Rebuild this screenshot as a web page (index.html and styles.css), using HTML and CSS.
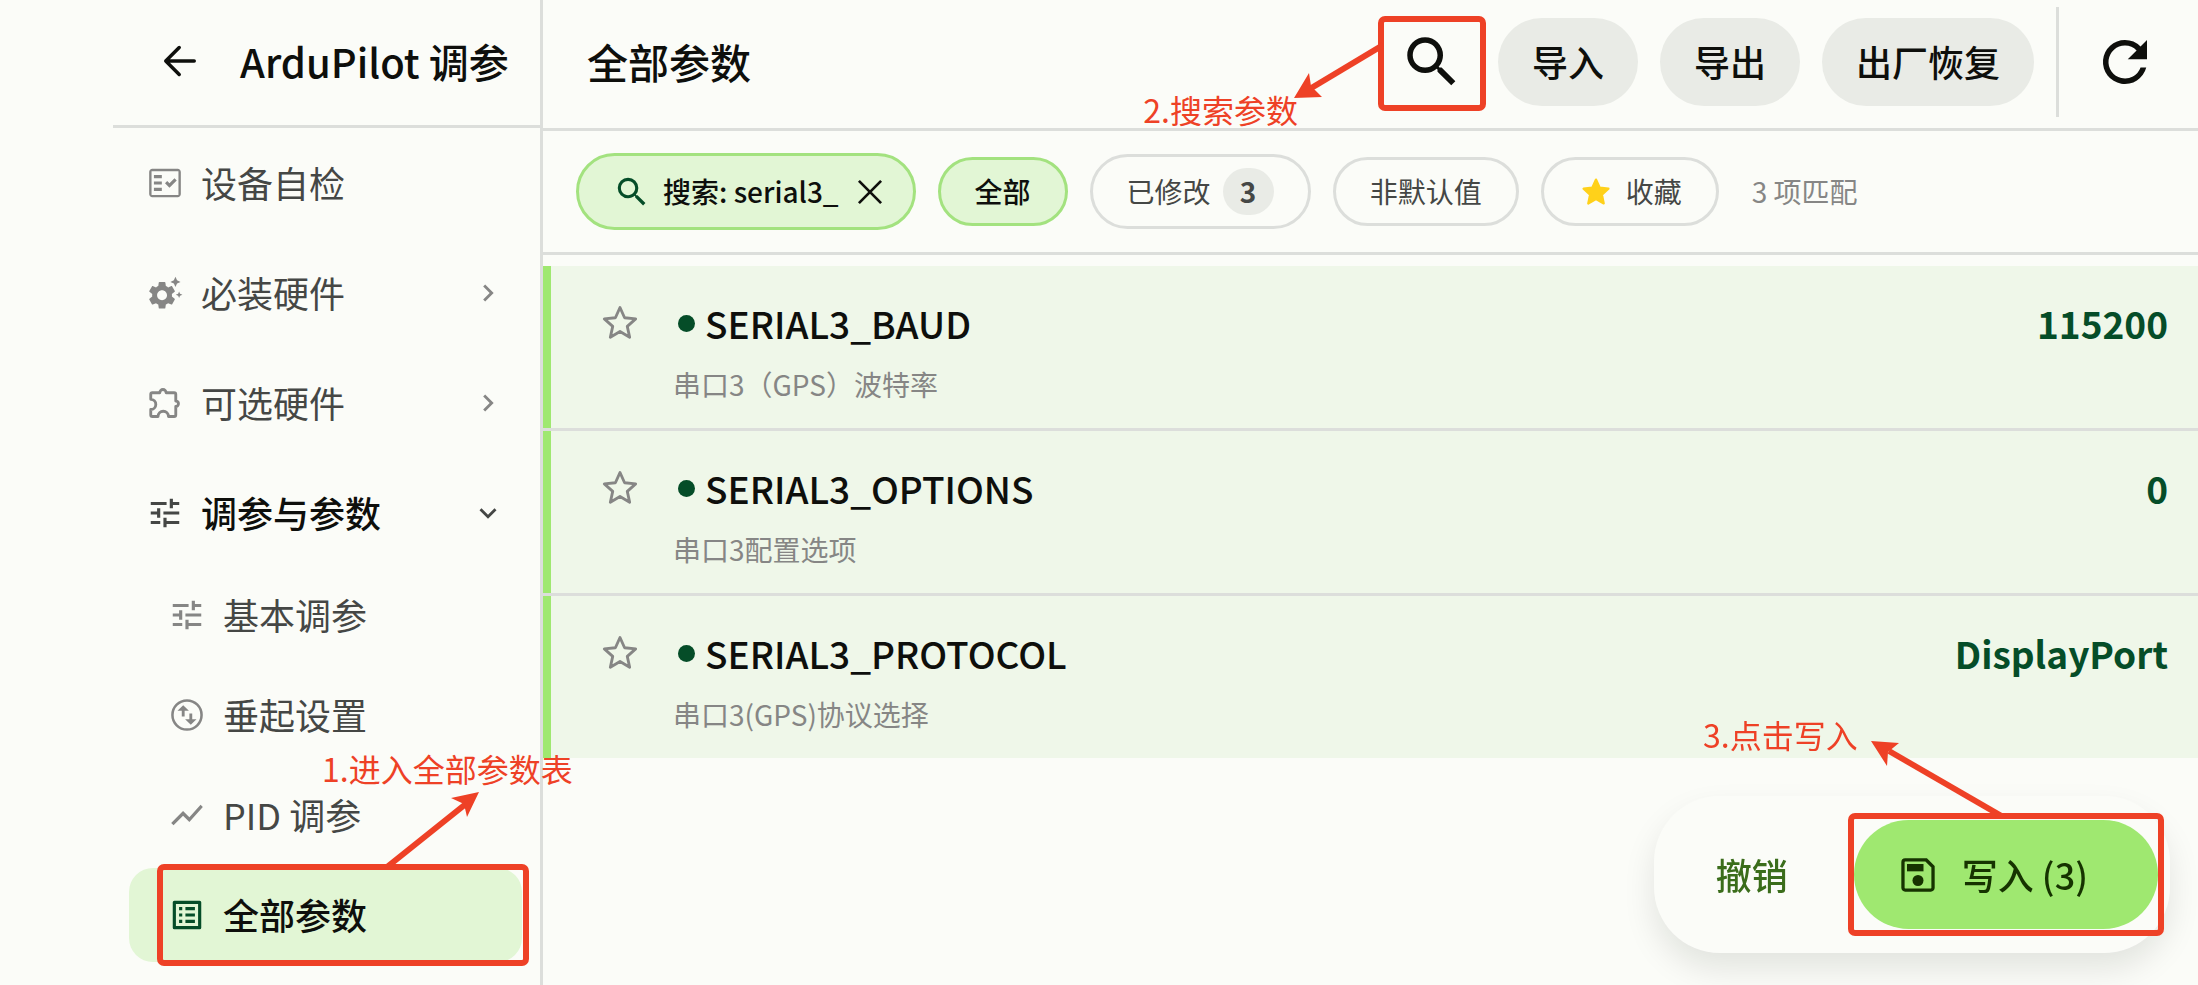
FILE: index.html
```
<!DOCTYPE html>
<html lang="zh-CN">
<head>
    <meta charset="UTF-8">
    <meta name="viewport" content="width=device-width, initial-scale=1.0">
    <title>ArduPilot 调参</title>
    <link rel="stylesheet" href="styles.css">
</head>
<body>
    <svg class="sprite" aria-hidden="true">
        <symbol id="i-tune" viewBox="0 0 24 24"><path d="M3 17v2h6v-2H3zM3 5v2h10V5H3zm10 16v-2h8v-2h-8v-2h-2v6h2zM7 9v2H3v2h4v2h2V9H7zm14 4v-2H11v2h10zm-6-4h2V7h4V5h-4V3h-2v6z"/></symbol>
        <symbol id="i-right" viewBox="0 0 24 24"><path d="M8.59 16.59 13.17 12 8.59 7.41 10 6l6 6-6 6z"/></symbol>
        <symbol id="i-search" viewBox="0 0 24 24"><path d="M15.5 14h-.79l-.28-.27A6.47 6.47 0 0 0 16 9.5 6.5 6.5 0 1 0 9.5 16c1.61 0 3.09-.59 4.23-1.57l.27.28v.79l5 4.99L20.49 19l-4.99-5zm-6 0C7.01 14 5 11.99 5 9.5S7.01 5 9.5 5 14 7.01 14 9.5 11.99 14 9.5 14z"/></symbol>
        <symbol id="i-star" viewBox="0 0 24 24"><path d="M12 2.200l2.900 6.500 7 .7-5.300 4.700 1.500 6.900-6.100-3.600-6.100 3.600 1.500-6.900-5.300-4.700 7-.7z" fill="none" stroke="currentColor" stroke-width="1.800" stroke-linejoin="round"/></symbol>
    </svg>

    <div class="app">
        <aside class="sidebar">
            <header class="sidebar-header">
                <button class="back" aria-label="返回">
                    <svg class="icon" viewBox="0 0 24 24"><path d="M21 12H3M11.500 3.500L3 12l8.500 8.500" fill="none" stroke="currentColor" stroke-width="2.200" stroke-linecap="round" stroke-linejoin="round"/></svg>
                </button>
                <h2>ArduPilot 调参</h2>
            </header>
            <nav class="menu">
                <a class="menu-item" href="#">
                    <svg class="icon" viewBox="0 0 24 24"><path d="M20 3H4c-1.100 0-2 .9-2 2v14c0 1.100.9 2 2 2h16c1.100 0 2-.9 2-2V5c0-1.100-.9-2-2-2zm0.500 16.500h-17v-15h17v15z"/><path d="M19.410 10.420 17.990 9l-3.170 3.170-1.410-1.420L12 12.160 14.820 15zM5 7h5v2H5zm0 4h5v2H5zm0 4h5v2H5z"/></svg>
                    <span>设备自检</span>
                </a>
                <a class="menu-item" href="#">
                    <svg class="icon" viewBox="0 0 24 24"><path transform="translate(-.3 3) scale(.87)" d="M19.140 12.940c.04-.3.06-.61.06-.94 0-.32-.02-.64-.07-.94l2.030-1.580c.18-.14.23-.41.12-.61l-1.920-3.320c-.12-.22-.37-.29-.59-.22l-2.390.96c-.5-.38-1.030-.7-1.620-.94l-.36-2.540c-.04-.24-.24-.41-.48-.41h-3.840c-.24 0-.43.17-.47.41l-.36 2.540c-.59.24-1.130.57-1.620.94l-2.390-.96c-.22-.08-.47 0-.59.22L2.740 8.870c-.12.21-.08.47.12.61l2.030 1.580c-.05.3-.09.63-.09.94s.02.64.07.94l-2.030 1.580c-.18.14-.23.41-.12.61l1.920 3.320c.12.22.37.29.59.22l2.390-.96c.5.38 1.030.7 1.620.94l.36 2.540c.05.24.24.41.48.41h3.840c.24 0 .44-.17.47-.41l.36-2.540c.59-.24 1.130-.56 1.620-.94l2.390.96c.22.08.47 0 .59-.22l1.920-3.320c.12-.22.07-.47-.12-.61zM12 15.600c-1.980 0-3.600-1.620-3.600-3.600s1.620-3.600 3.600-3.600 3.600 1.620 3.600 3.600-1.620 3.600-3.600 3.600z"/><path d="M18.600 1.800l1 2.200 2.200 1-2.200 1-1 2.200-1-2.200-2.200-1 2.200-1zM20.900 11l.6 1.500 1.500.6-1.500.6-.6 1.500-.6-1.500-1.500-.6 1.500-.6z"/></svg>
                    <span>必装硬件</span>
                    <svg class="arrow" viewBox="0 0 24 24"><use href="#i-right"/></svg>
                </a>
                <a class="menu-item" href="#">
                    <svg class="icon" viewBox="0 0 24 24"><path d="M4.500 5.500h4.200a2 2 0 0 1 4 0h5.100a1 1 0 0 1 1 1v4.300a1.700 1.700 0 0 1 0 3.400v5.300a1 1 0 0 1-1 1h-3.600a3.300 3.300 0 0 0-6.600 0H4a1 1 0 0 1-1-1v-3.400a3.200 3.200 0 0 0 0-6.400V6.500a1 1 0 0 1 1-1z" fill="none" stroke="currentColor" stroke-width="1.800" stroke-linejoin="round"/></svg>
                    <span>可选硬件</span>
                    <svg class="arrow" viewBox="0 0 24 24"><use href="#i-right"/></svg>
                </a>
                <a class="menu-item open" href="#">
                    <svg class="icon" viewBox="0 0 24 24"><use href="#i-tune"/></svg>
                    <span>调参与参数</span>
                    <svg class="arrow" viewBox="0 0 24 24"><path d="M7.410 8.590 12 13.170l4.590-4.580L18 10l-6 6-6-6z"/></svg>
                </a>
                <div class="submenu">
                    <a class="submenu-item" href="#">
                        <svg class="icon" viewBox="0 0 24 24"><use href="#i-tune"/></svg>
                        <span>基本调参</span>
                    </a>
                    <a class="submenu-item" href="#">
                        <svg class="icon" viewBox="0 0 24 24"><circle cx="12" cy="12" r="9.200" fill="none" stroke="currentColor" stroke-width="1.600"/><path d="M6 9.300 9.600 5.800l3.600 3.500h-2.700V13H8.700V9.300zM18 14.700l-3.600 3.500-3.600-3.500h2.700V11h1.800v3.700z"/></svg>
                        <span>垂起设置</span>
                    </a>
                    <a class="submenu-item" href="#">
                        <svg class="icon" viewBox="0 0 24 24"><path d="m3.500 18.490 6-6.010 4 4L22 6.920l-1.410-1.410-7.090 7.970-4-4L2 16.990z"/></svg>
                        <span>PID 调参</span>
                    </a>
                    <a class="submenu-item active" href="#">
                        <svg class="icon" viewBox="0 0 24 24"><path d="M4 3a1 1 0 0 0-1 1v16a1 1 0 0 0 1 1h16a1 1 0 0 0 1-1V4a1 1 0 0 0-1-1zm15 16H5V5h14zM11 7h6v2h-6zm0 4h6v2h-6zm0 4h6v2h-6zM7 7h2v2H7zm0 4h2v2H7zm0 4h2v2H7z"/></svg>
                        <span>全部参数</span>
                        <div class="callout callout-nav">
                            <svg class="callout-arrow" viewBox="0 0 100 80"><path d="M6 77 86 13" stroke="currentColor" stroke-width="6"/><path d="M98 2 86 27 83 14 70 8z"/></svg>
                            <span class="callout-text">1.进入全部参数表</span>
                        </div>
                    </a>
                </div>
            </nav>
        </aside>

        <main class="content">
            <header class="toolbar">
                <h1>全部参数</h1>
                <button class="icon-button" aria-label="搜索">
                    <svg class="icon-large" viewBox="0 0 24 24"><use href="#i-search"/></svg>
                    <span class="callout callout-search">
                        <svg class="callout-arrow" viewBox="0 0 100 60"><path d="M99 4 24 49" stroke="currentColor" stroke-width="6"/><path d="M10 57 25 32 27 45 38 56z"/></svg>
                        <span class="callout-text">2.搜索参数</span>
                    </span>
                </button>
                <button class="tool-button">导入</button>
                <button class="tool-button">导出</button>
                <button class="tool-button">出厂恢复</button>
                <span class="divider"></span>
                <button class="icon-button" aria-label="刷新">
                    <svg class="icon-large" viewBox="0 0 24 24"><path d="M17.650 6.350A7.960 7.960 0 0 0 12 4a8 8 0 1 0 7.730 10h-2.080A6 6 0 1 1 12 6c1.660 0 3.140.69 4.220 1.780L13 11h7V4z"/></svg>
                </button>
            </header>

            <section class="filters">
                <div class="chip search-chip selected">
                    <svg class="icon" viewBox="0 0 24 24"><use href="#i-search"/></svg>
                    <span>搜索: serial3_</span>
                    <button class="clear" aria-label="清除搜索">
                        <svg class="icon" viewBox="0 0 24 24"><path d="M5 5l14 14M19 5L5 19" fill="none" stroke="currentColor" stroke-width="1.700"/></svg>
                    </button>
                </div>
                <button class="chip selected">全部</button>
                <button class="chip count-chip">已修改 <span class="count">3</span></button>
                <button class="chip">非默认值</button>
                <button class="chip">
                    <svg class="fav" viewBox="-1 -1 26 26"><path d="M12 3l2.700 5.900 6.300.7-4.700 4.300 1.300 6.400-5.600-3.300-5.600 3.300 1.300-6.400L3 9.600l6.300-.7z" stroke="currentColor" stroke-width="1.600" stroke-linejoin="round"/></svg>
                    收藏
                </button>
                <span class="matches">3 项匹配</span>
            </section>

            <ul class="params">
                <li class="param">
                    <button class="star" aria-label="收藏 SERIAL3_BAUD"><svg viewBox="0 0 24 24"><use href="#i-star"/></svg></button>
                    <div class="param-info">
                        <h3><i class="dot"></i>SERIAL3_BAUD</h3>
                        <p>串口3（GPS）波特率</p>
                    </div>
                    <strong class="param-value">115200</strong>
                </li>
                <li class="param">
                    <button class="star" aria-label="收藏 SERIAL3_OPTIONS"><svg viewBox="0 0 24 24"><use href="#i-star"/></svg></button>
                    <div class="param-info">
                        <h3><i class="dot"></i>SERIAL3_OPTIONS</h3>
                        <p>串口3配置选项</p>
                    </div>
                    <strong class="param-value">0</strong>
                </li>
                <li class="param">
                    <button class="star" aria-label="收藏 SERIAL3_PROTOCOL"><svg viewBox="0 0 24 24"><use href="#i-star"/></svg></button>
                    <div class="param-info">
                        <h3><i class="dot"></i>SERIAL3_PROTOCOL</h3>
                        <p>串口3(GPS)协议选择</p>
                    </div>
                    <strong class="param-value">DisplayPort</strong>
                </li>
            </ul>

            <div class="action-bar">
                <button class="undo">撤销</button>
                <button class="write">
                    <svg class="save" viewBox="0 0 24 24"><path d="M5 3.800h11.500l3.700 3.700V19a1.200 1.200 0 0 1-1.200 1.200H5A1.200 1.200 0 0 1 3.800 19V5A1.200 1.200 0 0 1 5 3.800z" fill="none" stroke="currentColor" stroke-width="1.800"/><path d="M6 6h9v4H6z"/><circle cx="12" cy="15" r="3"/></svg>
                    写入 (3)
                    <span class="callout callout-write">
                        <svg class="callout-arrow" viewBox="0 0 140 80"><path d="M138 79 22 12" stroke="currentColor" stroke-width="6"/><path d="M4 2 32 4 21 13 20 27z"/></svg>
                        <span class="callout-text">3.点击写入</span>
                    </span>
                </button>
            </div>
        </main>
    </div>
</body>
</html>
```
FILE: styles.css
```
* {
    box-sizing: border-box;
    margin: 0;
    padding: 0;
}

body {
    background-color: #fbfcf8;
    color: #0e0f0c;
    font-family: "Noto Sans CJK SC", "Noto Sans", sans-serif;
    font-size: 36px;
    line-height: 1.2;
}

button {
    border: none;
    background: none;
    color: inherit;
    font: inherit;
    cursor: pointer;
}

a {
    color: inherit;
    text-decoration: none;
}

svg {
    display: block;
    flex: none;
    fill: currentColor;
}

.sprite {
    position: absolute;
    width: 0;
    height: 0;
}

.app {
    display: flex;
    min-height: 100vh;
}

.icon {
    width: 38px;
    height: 38px;
}

.icon-large {
    width: 66px;
    height: 66px;
}

/* Sidebar */
.sidebar {
    flex: none;
    width: 543px;
    padding-left: 113px;
    border-right: 3px solid #dcdedb;
}

.sidebar-header {
    display: flex;
    align-items: center;
    gap: 41px;
    height: 128px;
    padding: 0 30px 4px 48px;
    border-bottom: 3px solid #dcdedb;
}

h1 {
    font-size: 41px;
    font-weight: 500;
    white-space: nowrap;
}

h2 {
    font-size: 40px;
    font-weight: 500;
    white-space: nowrap;
}

.menu {
    padding: 3px 18px 0 16px;
}

.menu-item,
.submenu-item {
    display: flex;
    align-items: center;
    gap: 17px;
    color: #454745;
}

.menu-item {
    height: 104px;
    margin-bottom: 6px;
    padding: 0 17px;
}

.menu-item .icon,
.menu-item .arrow,
.submenu-item .icon {
    color: #868685;
}

.menu-item .arrow {
    width: 34px;
    height: 34px;
    margin-left: auto;
}

.menu-item.open,
.submenu-item.active {
    color: #0e0f0c;
    font-weight: 500;
}

.menu-item.open {
    margin-bottom: 3px;
}

.menu-item.open .icon,
.menu-item.open .arrow {
    color: #454745;
}

.submenu {
    display: flex;
    flex-direction: column;
    gap: 6px;
}

.submenu-item {
    position: relative;
    height: 94px;
    padding: 0 39px;
    border-radius: 24px;
}

.submenu-item.active {
    background-color: #e2f6d5;
}

.submenu-item.active .icon {
    color: #054d28;
}

/* Toolbar */
.content {
    flex: 1;
    min-width: 0;
}

.toolbar {
    display: flex;
    align-items: center;
    gap: 22px;
    height: 131px;
    padding: 0 29px 4px 44px;
    border-bottom: 3px solid #dcdedb;
}

.toolbar h1 {
    margin-right: auto;
}

.icon-button {
    position: relative;
    display: flex;
    align-items: center;
    justify-content: center;
    width: 88px;
    height: 88px;
}

.tool-button {
    height: 88px;
    padding: 0 34px;
    border-radius: 44px;
    background-color: #e9ebe6;
    font-weight: 500;
    white-space: nowrap;
}

.divider {
    width: 3px;
    height: 110px;
    background-color: #dcdedb;
}

/* Filters */
.filters {
    display: flex;
    align-items: center;
    gap: 22px;
    height: 124px;
    padding: 0 33px;
    border-bottom: 3px solid #dcdedb;
    font-size: 28px;
    white-space: nowrap;
}

.chip {
    display: flex;
    align-items: center;
    gap: 12px;
    height: 69px;
    padding: 0 34px;
    border: 3px solid #dcdedb;
    border-radius: 39px;
    color: #454745;
}

.chip.selected {
    border-color: #a3e27f;
    background-color: #e2f6d5;
    color: #0e0f0c;
    font-weight: 500;
}

.search-chip {
    height: 77px;
    padding-right: 24px;
}

.search-chip > .icon {
    color: #054d28;
}

.count-chip {
    height: 75px;
}

.count {
    width: 51px;
    height: 47px;
    border-radius: 24px;
    background-color: #e9ebe6;
    font-weight: 700;
    line-height: 47px;
    text-align: center;
}

.fav {
    width: 36px;
    height: 36px;
    color: #ffd11a;
}

.matches {
    margin-left: 11px;
    color: #868685;
}

/* Parameter list */
.params {
    padding-top: 11px;
    list-style: none;
}

.param {
    display: flex;
    align-items: flex-start;
    min-height: 162px;
    padding: 13px 30px 0 25px;
    border-left: 8px solid #9fe870;
    background-color: #eff7e9;
}

.param + .param {
    margin-top: 3px;
    box-shadow: 0 -3px 0 #dcdedb;
}

.star {
    display: flex;
    align-items: center;
    justify-content: center;
    width: 88px;
    height: 88px;
    color: #868685;
}

.star svg {
    width: 38px;
    height: 38px;
}

.param-info {
    flex: 1;
    padding: 22px 0 0 9px;
}

h3 {
    display: flex;
    align-items: center;
    gap: 10px;
    margin-bottom: 23px;
    padding-left: 5px;
    font-size: 37px;
    font-weight: 500;
}

.dot {
    width: 17px;
    height: 17px;
    border-radius: 50%;
    background-color: #054d28;
}

.param-info p {
    color: #868685;
    font-size: 28px;
}

.param-value {
    padding-top: 22px;
    color: #054d28;
    font-size: 37px;
    font-weight: 700;
}

/* Floating actions */
.action-bar {
    position: fixed;
    right: 28px;
    bottom: 32px;
    display: flex;
    align-items: center;
    height: 157px;
    padding: 0 12px;
    border-radius: 66px;
    background-color: #fbfcf8;
    box-shadow: 0 16px 32px rgba(14, 15, 12, 0.1);
}

.undo {
    height: 109px;
    padding: 0 66px 0 50px;
    color: #3b6d1b;
    font-weight: 500;
}

.write {
    position: relative;
    display: flex;
    align-items: center;
    gap: 22px;
    height: 109px;
    padding: 0 70px 0 42px;
    border-radius: 55px;
    background-color: #9fe870;
    color: #163300;
    font-weight: 500;
}

.save {
    width: 44px;
    height: 44px;
}

/* Step callouts drawn over the controls */
.callout {
    position: absolute;
    border: 6px solid #ee4126;
    border-radius: 7px;
    color: #ee4126;
    font-size: 32px;
    font-weight: 400;
    white-space: nowrap;
}

.callout .callout-arrow,
.callout-text {
    position: absolute;
}

.callout-nav {
    inset: -4px -7px -4px 28px;
}

.callout-nav .callout-arrow {
    bottom: 100%;
    left: 218px;
    width: 100px;
    height: 80px;
}

.callout-nav .callout-text {
    bottom: calc(100% + 83px);
    left: 159px;
}

.callout-search {
    inset: -2px -10px -5px -10px;
}

.callout-search .callout-arrow {
    top: 19px;
    right: 100%;
    width: 100px;
    height: 60px;
}

.callout-search .callout-text {
    top: 68px;
    right: calc(100% + 86px);
}

.callout-write {
    inset: -7px -6px;
}

.callout-write .callout-arrow {
    bottom: 100%;
    left: 13px;
    width: 140px;
    height: 80px;
}

.callout-write .callout-text {
    right: calc(100% - 4px);
    bottom: calc(100% + 66px);
}
```
